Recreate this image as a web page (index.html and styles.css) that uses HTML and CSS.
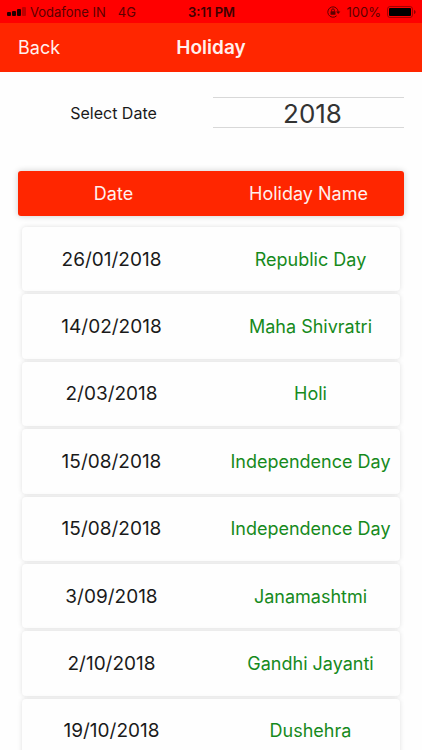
FILE: index.html
```html
<!DOCTYPE html>
<html lang="en">
<head>
<meta charset="utf-8">
<meta name="viewport" content="width=device-width, initial-scale=1">
<title>Holiday</title>
<link rel="stylesheet" href="styles.css">
</head>
<body>
<div class="status">
  <div class="status-left">
    <svg class="signal" width="20" height="10" viewBox="0 0 20 10" aria-hidden="true">
      <rect x="0" y="5" width="4" height="4" rx="1"/>
      <rect x="5" y="4" width="4" height="5" rx="1"/>
      <rect x="10" y="2" width="4" height="7" rx="1"/>
      <rect x="15" y="0" width="4" height="9" rx="1" opacity=".3"/>
    </svg>
    <span>Vodafone IN</span>
    <span class="network">4G</span>
  </div>
  <div class="clock">3:11 PM</div>
  <div class="status-right">
    <svg width="14" height="12" viewBox="0 0 14 12" aria-hidden="true">
      <path d="M9.600 9.800A5.200 5.200 0 1 1 11.200 6" fill="none" stroke="currentColor"/>
      <path d="M9 5.400h4.400L11.200 8z" fill="currentColor"/>
      <rect x="3.500" y="5.200" width="5" height="3.600" rx=".5" fill="currentColor"/>
      <path d="M4.600 5.500V4.300a1.400 1.400 0 0 1 2.800 0v1.200" fill="none" stroke="currentColor"/>
    </svg>
    <span>100%</span>
    <svg width="29" height="12" viewBox="0 0 29 12" aria-hidden="true">
      <rect x=".5" y=".5" width="25" height="11" rx="2.5" fill="none" stroke="#000" opacity=".35"/>
      <rect x="2" y="2" width="22" height="8" rx="1" fill="#000"/>
      <path d="M27 4v4c1-.4 1.600-1.100 1.600-2S28 4.400 27 4z" fill="#000" opacity=".45"/>
    </svg>
  </div>
</div>
<header class="nav">
  <button class="back" type="button">Back</button>
  <h1>Holiday</h1>
</header>
<main>
  <div class="filter">
    <label for="year">Select Date</label>
    <select id="year"><option>2018</option></select>
  </div>
  <table>
    <thead>
      <tr><th scope="col">Date</th><th scope="col">Holiday Name</th></tr>
    </thead>
    <tbody>
      <tr><td>26/01/2018</td><td>Republic Day</td></tr>
      <tr><td>14/02/2018</td><td>Maha Shivratri</td></tr>
      <tr><td>2/03/2018</td><td>Holi</td></tr>
      <tr><td>15/08/2018</td><td>Independence Day</td></tr>
      <tr><td>15/08/2018</td><td>Independence Day</td></tr>
      <tr><td>3/09/2018</td><td>Janamashtmi</td></tr>
      <tr><td>2/10/2018</td><td>Gandhi Jayanti</td></tr>
      <tr><td>19/10/2018</td><td>Dushehra</td></tr>
    </tbody>
  </table>
</main>
</body>
</html>
```
FILE: styles.css
```css
* { box-sizing: border-box; }

html { height: 100%; overflow: hidden; }

body {
  margin: 0;
  background: #fefefe;
  color: #1a1a1a;
  font-family: Inter, "Liberation Sans", sans-serif;
}

.status {
  display: grid;
  grid-template-columns: 1fr auto 1fr;
  align-items: center;
  height: 23px;
  padding: 1px 6px 0 7px;
  background: #ff0000;
  color: #5c0000;
  font-size: 13px;
}

.status-left,
.status-right { display: flex; align-items: center; }

.status-left { gap: 3px; }
.status-right { justify-content: flex-end; gap: 6px; }
.signal { fill: #200000; }
.network { margin-left: 9px; }
.clock { font-weight: 600; color: #400000; }

.nav {
  display: grid;
  grid-template-columns: 1fr auto 1fr;
  align-items: center;
  height: 49px;
  padding: 0 18px;
  background: #ff2600;
  color: #fff0ee;
}

.nav h1 { margin: 0; font-size: 19px; font-weight: 600; }

.back {
  justify-self: start;
  padding: 0;
  border: 0;
  background: none;
  color: inherit;
  font: inherit;
  font-size: 18px;
}

main { padding: 25px 18px 0; }

.filter {
  display: grid;
  grid-template-columns: 1fr 1fr;
  gap: 4px;
  align-items: center;
  margin-bottom: 43px;
}

.filter label { text-align: center; font-size: 16px; }

.filter select {
  width: 100%;
  height: 31px;
  padding: 0 0 0 8px;
  border: solid #d8d8d8;
  border-width: 1px 0;
  border-radius: 0;
  appearance: none;
  background: none;
  color: #333;
  font: inherit;
  font-size: 26px;
  text-align: center;
  text-align-last: center;
}

table,
thead { display: block; }

thead tr,
tbody tr {
  display: grid;
  grid-template-columns: 1fr 1fr;
  align-items: center;
}

thead tr {
  gap: 4px;
  height: 45px;
  border-radius: 3px;
  background: #ff2600;
  box-shadow: 0 0 6px rgba(0, 0, 0, .2);
}

th {
  padding: 0;
  color: #fff0ee;
  font-size: 18px;
  font-weight: 400;
}

tbody {
  display: grid;
  grid-auto-rows: 1fr;
  gap: 3px;
  height: 536px;
  margin: 11px 4px 0;
}

tbody tr {
  gap: 20px;
  border-radius: 4px;
  background: #fefefe;
  box-shadow: 0 0 5px rgba(0, 0, 0, .12);
}

td {
  padding: 0;
  font-size: 19px;
  text-align: center;
  white-space: nowrap;
}

td:last-child { color: #168a1c; font-size: 18px; }
```
